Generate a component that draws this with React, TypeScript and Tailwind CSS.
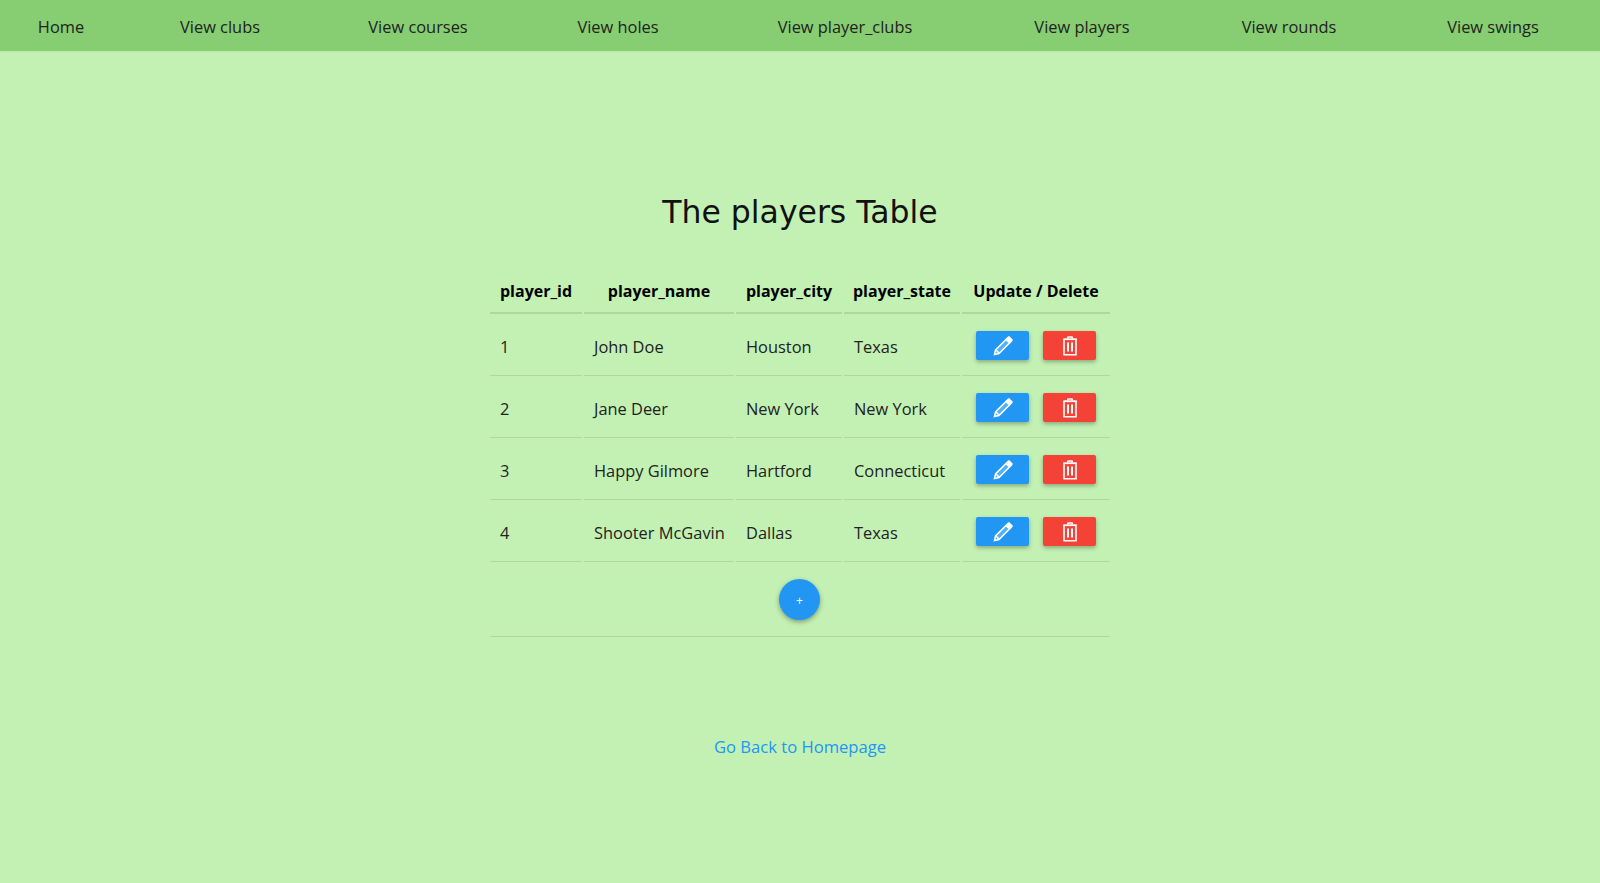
import React from 'react';

const navLinks = ['Home', 'View clubs', 'View courses', 'View holes', 'View player_clubs', 'View players', 'View rounds', 'View swings'];

const players = [
  { id: 1, name: 'John Doe', city: 'Houston', state: 'Texas' },
  { id: 2, name: 'Jane Deer', city: 'New York', state: 'New York' },
  { id: 3, name: 'Happy Gilmore', city: 'Hartford', state: 'Connecticut' },
  { id: 4, name: 'Shooter McGavin', city: 'Dallas', state: 'Texas' },
];

const PencilIcon = () => (
  <svg width="20" height="20" viewBox="0 0 20 20" fill="none" stroke="white" strokeWidth="1.5">
    <path d="M1.5 18.5l1-4.5L13 3.5l3.5 3.5L6 17.5z" fill="white" fillOpacity="0.25" />
    <path d="M15 1.5l1-.5 3 3-.5 1-1.5 1.5-3.5-3.5z" fill="white" />
    <path d="M3 14l3 3" />
  </svg>
);

const TrashIcon = () => (
  <svg width="16" height="20" viewBox="0 0 16 20" fill="none" stroke="white" strokeWidth="1.5">
    <path d="M1.2 3.2h13.6" strokeWidth="1.8" />
    <path d="M5.5 2.5l.5-1.5h4l.5 1.5" />
    <path d="M2 3.5v15.2h12V3.5" strokeWidth="1.6" />
    <path d="M6 6.5v9M10 6.5v9" strokeWidth="2" />
  </svg>
);

const headCell = 'h-[44px] border-b-2 border-[#aed8a0] px-0 text-center text-[16px] font-bold whitespace-nowrap text-black';
const bodyCell = 'h-[60px] border-b border-[#aed8a0] px-[10px] pt-[3px] text-left text-[16.4px] whitespace-nowrap text-[#222]';
const actionCell = 'h-[60px] border-b border-[#aed8a0] px-[10px]';
const actionBtn = 'flex h-[29px] w-[53px] items-center justify-center rounded-[2px] shadow-[0_2px_4px_rgba(0,0,0,0.3)]';

export default function App() {
  return (
    <div className="flex min-h-[883px] flex-col bg-[#c3f1b4] font-['Open_Sans',sans-serif]">
      <nav className="grid h-[51px] grid-cols-[122px_196px_200px_200px_254px_220px_194px_214px] items-center bg-[#87cd71] pt-[4px] shadow-[0_1px_2px_rgba(0,0,0,0.05)]">
        {navLinks.map((link) => (
          <a key={link} className="text-center text-[16.4px] text-[#222]">
            {link}
          </a>
        ))}
      </nav>

      <h1 className="mt-[138px] text-center font-['DejaVu_Sans',sans-serif] text-[31.5px] leading-[46px] text-[#111]">
        The players Table
      </h1>

      <div className="mt-[33px] flex justify-center">
        <table className="w-[624px] table-fixed border-separate border-spacing-[2px]">
          <thead>
            <tr>
              <th className={`${headCell} w-[92px]`}>player_id</th>
              <th className={`${headCell} w-[150px]`}>player_name</th>
              <th className={`${headCell} w-[106px]`}>player_city</th>
              <th className={`${headCell} w-[116px]`}>player_state</th>
              <th className={headCell}>Update / Delete</th>
            </tr>
          </thead>
          <tbody>
            {players.map((p) => (
              <tr key={p.id}>
                <td className={bodyCell}>{p.id}</td>
                <td className={bodyCell}>{p.name}</td>
                <td className={bodyCell}>{p.city}</td>
                <td className={bodyCell}>{p.state}</td>
                <td className={actionCell}>
                  <div className="flex justify-center gap-[14px]">
                    <button className={`${actionBtn} bg-[#2196f3]`}>
                      <PencilIcon />
                    </button>
                    <button className={`${actionBtn} bg-[#f44336]`}>
                      <TrashIcon />
                    </button>
                  </div>
                </td>
              </tr>
            ))}
            <tr>
              <td colSpan={5} className="h-[73px] border-b border-[#aed8a0] pr-[2px] pb-[2px]">
                <div className="flex justify-center">
                  <button className="flex h-[41px] w-[41px] items-center justify-center rounded-full bg-[#2196f3] pt-[3px] pl-[1px] text-[12px] text-white shadow-[0_2px_5px_rgba(0,0,0,0.35)]">
                    +
                  </button>
                </div>
              </td>
            </tr>
          </tbody>
        </table>
      </div>

      <a className="mt-[96px] text-center text-[16.6px] text-[#2196f3]">Go Back to Homepage</a>
    </div>
  );
}
